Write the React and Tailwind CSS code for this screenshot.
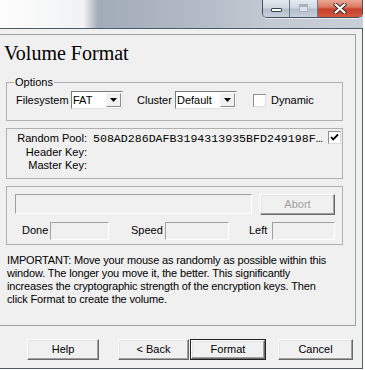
import React from 'react';

const sunken = 'border border-t-[#a0a0a0] border-l-[#a0a0a0] border-b-white border-r-white';

function Btn({ children, w, def, disabled, className = '' }) {
  return (
    <div className={`${w} h-[21px] ${def ? 'border border-[#222]' : ''} ${className}`}>
      <div
        className={`h-full flex items-center justify-center bg-[#f0f0f0] border border-t-white border-l-white border-b-[#696969] border-r-[#696969] shadow-[inset_-1px_-1px_0_#a0a0a0,inset_1px_1px_0_#e3e3e3] ${
          disabled ? 'text-[#a0a0a0]' : 'text-black'
        }`}
      >
        {children}
      </div>
    </div>
  );
}

function Combo({ w, value }) {
  return (
    <div className={`${w} h-[18px] flex bg-white border border-t-[#7a7a7a] border-l-[#7a7a7a] border-b-[#e3e3e3] border-r-[#e3e3e3]`}>
      <span className="flex-1 pl-[1px] leading-[16px]">{value}</span>
      <div className="w-[15px] h-[14px] mt-[1px] mr-[1px] flex items-center justify-center bg-[#f0f0f0] border border-t-[#f4f4f4] border-l-[#f4f4f4] border-b-[#8a8a8a] border-r-[#8a8a8a]">
        <svg width="7" height="4" viewBox="0 0 7 4">
          <path d="M0 0h7L3.5 4z" fill="#000" />
        </svg>
      </div>
    </div>
  );
}

function Check({ checked, className = '' }) {
  return (
    <div className={`w-[13px] h-[13px] bg-white border border-t-[#8e8e8e] border-l-[#8e8e8e] border-b-[#dcdcdc] border-r-[#dcdcdc] flex items-center justify-center ${className}`}>
      {checked && (
        <svg width="9" height="9" viewBox="0 0 9 9">
          <path d="M1 4l2.2 2.4L8 1.5" stroke="#000" strokeWidth="1.8" fill="none" />
        </svg>
      )}
    </div>
  );
}

function TitleBar() {
  return (
    <div className="w-[363px] h-[28px] flex justify-end bg-[linear-gradient(90deg,#fdfdfd_0%,#f1f2f3_23%,#a2acb9_27%,#afb8c3_50%,#c3cad3_75%,#c8cfd7_100%)]">
      <div className="flex h-[18px] border border-t-0 border-[#45505e] rounded-b-[5px] overflow-hidden shadow-[0_1px_0_rgba(255,255,255,0.6)]">
        <div className="w-[27px] flex items-start justify-center pt-[8px] border-r border-[#6e7986] bg-[linear-gradient(180deg,#e6ebf1_0%,#cfd7e1_45%,#b4bfcc_55%,#c6d0db_100%)]">
          <div className="w-[11px] h-[4px] bg-white border border-[#39424e] rounded-[1px]" />
        </div>
        <div className="w-[28px] flex items-start justify-center pt-[4px] border-r border-[#6e7986] bg-[linear-gradient(180deg,#e6ebf1_0%,#cfd7e1_45%,#b4bfcc_55%,#c6d0db_100%)]">
          <div className="w-[9px] h-[8px] border border-[#a9b3bf] bg-[#dde3ea] shadow-[inset_0_2px_0_#a9b3bf]" />
        </div>
        <div className="w-[44px] flex items-start justify-center pt-[3px] bg-[linear-gradient(180deg,#eba896_0%,#dc7a63_40%,#c7402b_55%,#d2583f_100%)]">
          <svg width="14" height="11" viewBox="0 0 14 11">
            <path d="M2.5 1.5l9 8M11.5 1.5l-9 8" stroke="#3a2a28" strokeWidth="4" strokeLinecap="round" />
            <path d="M2.5 1.5l9 8M11.5 1.5l-9 8" stroke="#fff" strokeWidth="2.2" strokeLinecap="round" />
          </svg>
        </div>
      </div>
    </div>
  );
}

export default function App() {
  return (
    <div className="w-[365px] h-[370px] bg-white overflow-hidden text-[11px] leading-[13px] text-black font-['Liberation_Sans',Arial,sans-serif]">
      <TitleBar />
      <div className="w-[363px] border-t border-r border-b border-[#515c69] bg-[#f0f0f0] pt-[5px]">
        {/* wizard page */}
        <div className="w-[356px] h-[292px] border-t border-r border-b border-[#a0a0a0]">
          <h1 className="pt-[8px] pl-[4px] text-[20px] leading-[20px] font-normal font-['Liberation_Serif','Times_New_Roman',serif]">
            Volume Format
          </h1>

          <fieldset className="ml-[6px] mt-[13px] w-[337px] border border-[#b0b0b0] px-[7px] pt-[2px] pb-[11px]">
            <legend className="px-[1px] leading-[13px]">Options</legend>
            <div className="flex items-center h-[18px] pl-[2px]">
              <span className="w-[55px]">Filesystem</span>
              <Combo w="w-[52px]" value="FAT" />
              <span className="ml-[14px] w-[38px]">Cluster</span>
              <Combo w="w-[62px]" value="Default" />
              <Check className="ml-[16px]" />
              <span className="ml-[5px]">Dynamic</span>
            </div>
          </fieldset>

          <div className="ml-[6px] mt-[7px] w-[337px] border border-[#b0b0b0] pt-[3px] pb-[5px] leading-[13.5px]">
            <div className="flex items-start">
              <span className="w-[80px] text-right">Random Pool:</span>
              <span className="ml-[6px] text-[11.6px] font-['Liberation_Mono','Courier_New',monospace]">
                508AD286DAFB3194313935BFD249198F…
              </span>
              <Check checked className="ml-auto mr-[1px] mt-[-1px]" />
            </div>
            <div className="w-[80px] text-right">Header Key:</div>
            <div className="w-[80px] text-right">Master Key:</div>
          </div>

          <div className="ml-[6px] mt-[7px] w-[337px] border border-[#b0b0b0] pt-[6px] pb-[4px]">
            <div className="flex items-center h-[23px] pl-[8px]">
              <div className={`w-[237px] h-[20px] bg-[#f0f0f0] ${sunken}`} />
              <Btn w="w-[75px]" disabled className="ml-[8px]">Abort</Btn>
            </div>
            <div className="flex items-center h-[18px] mt-[6px] pl-[15px]">
              <span className="w-[28px]">Done</span>
              <div className={`w-[59px] h-[18px] ${sunken}`} />
              <span className="ml-[22px] w-[34px]">Speed</span>
              <div className={`w-[64px] h-[18px] ${sunken}`} />
              <span className="ml-[20px] w-[23px]">Left</span>
              <div className={`w-[63px] h-[18px] ${sunken}`} />
            </div>
          </div>

          <p className="mt-[9px] px-[7px] leading-[13.3px] tracking-[-0.15px] whitespace-nowrap">
            IMPORTANT: Move your mouse as randomly as possible within this
            <br />
            window. The longer you move it, the better. This significantly
            <br />
            increases the cryptographic strength of the encryption keys. Then
            <br />
            click Format to create the volume.
          </p>
        </div>

        {/* buttons */}
        <div className="h-[42px] pt-[13px] flex items-start">
          <Btn w="w-[72px]" className="ml-[27px]">Help</Btn>
          <Btn w="w-[71px]" className="ml-[19px]">&lt; Back</Btn>
          <Btn w="w-[76px]" def className="ml-[1px]">Format</Btn>
          <Btn w="w-[75px]" className="ml-[12px]">Cancel</Btn>
        </div>
      </div>
    </div>
  );
}
